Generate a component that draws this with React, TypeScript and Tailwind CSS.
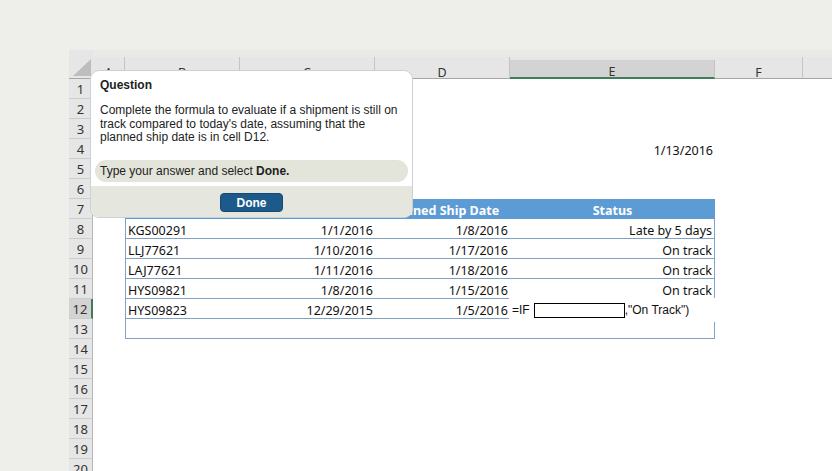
import React from "react";

const COLS = [24, 32, 115, 135, 135, 205, 88, 60];
const LETTERS = ["A", "B", "C", "D", "E", "F", ""];

type Cell = { text?: string; align?: "left" | "right" | "center"; bold?: boolean };

const data: Record<number, Record<number, Cell>> = {
  4: { 5: { text: "1/13/2016", align: "right" } },
  7: {
    2: { text: "Shipment ID", align: "center", bold: true },
    3: { text: "Order Date", align: "center", bold: true },
    4: { text: "Planned Ship Date", align: "center", bold: true },
    5: { text: "Status", align: "center", bold: true },
  },
  8: { 2: { text: "KGS00291" }, 3: { text: "1/1/2016", align: "right" }, 4: { text: "1/8/2016", align: "right" }, 5: { text: "Late by 5 days", align: "right" } },
  9: { 2: { text: "LLJ77621" }, 3: { text: "1/10/2016", align: "right" }, 4: { text: "1/17/2016", align: "right" }, 5: { text: "On track", align: "right" } },
  10: { 2: { text: "LAJ77621" }, 3: { text: "1/11/2016", align: "right" }, 4: { text: "1/18/2016", align: "right" }, 5: { text: "On track", align: "right" } },
  11: { 2: { text: "HYS09821" }, 3: { text: "1/8/2016", align: "right" }, 4: { text: "1/15/2016", align: "right" }, 5: { text: "On track", align: "right" } },
  12: { 2: { text: "HYS09823" }, 3: { text: "12/29/2015", align: "right" }, 4: { text: "1/5/2016", align: "right" } },
};

function HeaderRow() {
  return (
    <div className="flex h-[29px] bg-[#e6e6e6]">
      <div className="relative shrink-0 h-full border-b border-[#a6a6a6]" style={{ width: COLS[0] }}>
        <svg className="absolute right-[2px] bottom-[2px]" width="18" height="17" viewBox="0 0 18 17">
          <polygon points="18,0 18,17 0,17" fill="#bdbdbd" />
        </svg>
      </div>
      {LETTERS.map((l, i) => {
        const sel = l === "E";
        return (
          <div key={i} className="shrink-0 h-full flex flex-col" style={{ width: COLS[i + 1] }}>
            <div className="h-[7px] bg-[#e9e9e6]" />
            <div
              className={
                "flex-1 flex items-end justify-center leading-none text-[12.5px] text-[#333] border-r border-[#c4c4c4] " +
                (sel ? "bg-[#d3d3d3] border-b-2 border-b-[#3f7d5a] mt-[3px]" : "border-b border-b-[#a6a6a6]")
              }
            >
              <span className="translate-y-[1px]">{l}</span>
            </div>
          </div>
        );
      })}
    </div>
  );
}

function Row({ n }: { n: number }) {
  const sel = n === 12;
  const inTable = n >= 7 && n <= 13;
  const row = data[n] || {};
  return (
    <div className="flex h-[20px]">
      <div
        className={
          "shrink-0 flex items-center justify-center pt-[2px] text-[13px] text-[#333] border-b border-[#cdcdcd] " +
          (sel ? "bg-[#d3d3d3] border-r-2 border-r-[#3f7d5a]" : "bg-[#e6e6e6] border-r border-r-[#b5b5b5]")
        }
        style={{ width: COLS[0] }}
      >
        {n}
      </div>
      {COLS.slice(1).map((w, ci) => {
        const c = ci + 1;
        const cell = row[c];
        const tableCol = c >= 2 && c <= 5;
        let cls = "shrink-0 flex items-center pt-[5px] overflow-hidden whitespace-nowrap text-[12.5px] text-[#111] ";
        if (inTable && tableCol) {
          if (n === 7) {
            cls += "bg-[#5d9bd4] text-white ";
          } else {
            cls += "border-b border-b-[#7fa1c4] ";
            if (c === 2) cls += "border-l border-l-[#7fa1c4] ";
            if (c === 5) cls += "border-r border-r-[#7fa1c4] ";
          }
        }
        if (cell?.align === "right") cls += "justify-end pr-[2px] ";
        else if (cell?.align === "center") cls += "justify-center ";
        else cls += "pl-[2px] ";
        if (cell?.bold) cls += "font-bold ";
        return (
          <div key={c} className={cls} style={{ width: w }}>
            {cell?.text}
          </div>
        );
      })}
    </div>
  );
}

export default function App() {
  const rows = Array.from({ length: 20 }, (_, i) => i + 1);
  return (
    <div
      className="relative w-[832px] h-[471px] overflow-hidden bg-[#eeeeea]"
      style={{ fontFamily: '"Noto Sans", sans-serif' }}
    >
      <div className="pt-[50px] pl-[69px]">
        <div className="bg-white">
          <HeaderRow />
          {rows.map((n) => (
            <Row key={n} n={n} />
          ))}
        </div>
      </div>

      {/* formula overlay */}
      <div
        className="absolute left-[509px] top-[298px] w-[208px] h-[24px] bg-white flex items-center pl-[3px] text-[12px] text-[#111]"
        style={{ fontFamily: '"Liberation Sans", Arial, sans-serif' }}
      >
        <span>=IF</span>
        <div className="ml-[4px] w-[91px] h-[15px] border border-black bg-white" />
        <span>,"On Track")</span>
      </div>

      {/* question popup */}
      <div
        className="absolute left-[90px] top-[70px] w-[323px] h-[148px] rounded-[9px] border border-[#c9d1d9] bg-white overflow-hidden flex flex-col text-[#222]"
        style={{ fontFamily: '"Liberation Sans", Arial, sans-serif' }}
      >
        <div className="pt-[7px] px-[9px] text-[12px] leading-[14px] font-bold">Question</div>
        <div className="mt-[12px] px-[9px] text-[12px] leading-[13.5px]">
          Complete the formula to evaluate if a shipment is still on track compared to today's date, assuming that the
          planned ship date is in cell D12.
        </div>
        <div className="mt-auto mx-[4px] h-[22px] rounded-full bg-[#e3e5db] flex items-center px-[5px] text-[12px]">
          Type your answer and select&nbsp;<span className="font-bold">Done.</span>
        </div>
        <div className="mt-[4px] h-[31px] bg-[#e5e7df] flex justify-center pt-[7px]">
          <div className="w-[63px] h-[19px] rounded-[4px] bg-[#1b5a8b] border border-[#164a73] text-white text-[12px] font-bold flex items-center justify-center">
            Done
          </div>
        </div>
      </div>
    </div>
  );
}
